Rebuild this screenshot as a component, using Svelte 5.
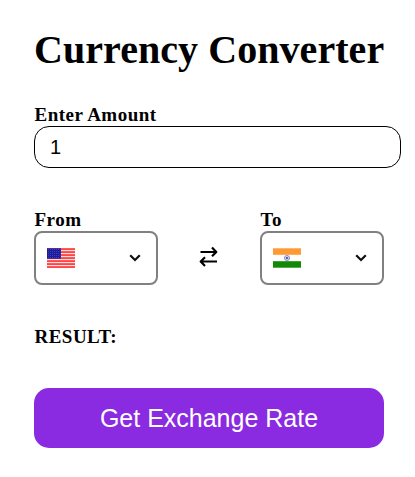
<script>
  let amount = $state('1');
  const redRows = [0, 2, 4, 6, 8, 10, 12];
  const starRows = [1, 3, 5, 7, 9];
  const starCols = [1, 3, 5, 7, 9, 11, 13];
</script>

{#snippet chevron()}
  <svg class="chevron" width="12" height="8" viewBox="0 0 12 8">
    <path d="M1.2 1.2 6 6 10.8 1.2" fill="none" stroke="#111" stroke-width="2.2" />
  </svg>
{/snippet}

<main>
  <h1>Currency Converter</h1>
  <label for="amount">Enter Amount</label>
  <input id="amount" type="text" bind:value={amount} />

  <div class="row">
    <div class="side">
      <span class="label">From</span>
      <button class="picker" aria-label="From currency">
        <svg width="28" height="20" viewBox="0 0 28 20">
          <rect width="28" height="19.5" y=".3" fill="#ffdcdc" />
          {#each redRows as r}
            <rect width="28" height="1.5" y={0.3 + r * 1.5} fill="#ff2222" />
          {/each}
          <rect width="14" height="10.4" y=".3" fill="#1c1ca0" />
          {#each starRows as y}
            {#each starCols as x}
              <rect {x} {y} width=".6" height=".6" fill="#7777cc" />
            {/each}
          {/each}
        </svg>
        {@render chevron()}
      </button>
    </div>
    <svg class="swap" width="20" height="22" viewBox="0 0 20 22">
      <g fill="none" stroke="#000" stroke-width="2.2">
        <path d="M1.5 6H17M13 1.5 17.3 6 13 10.2" stroke-linejoin="round" />
        <path d="M18 15.5H2M6 11.3 1.7 15.5 6 20" stroke-linejoin="round" />
      </g>
    </svg>
    <div class="side">
      <span class="label">To</span>
      <button class="picker" aria-label="To currency">
        <svg width="28" height="20" viewBox="0 0 28 20">
          <rect width="28" height="19.5" y=".3" fill="#fff" />
          <rect width="28" height="6.5" y=".3" fill="#ff9933" />
          <rect width="28" height="6.5" y="13.2" fill="#128807" />
          <circle cx="14" cy="10" r="2.5" fill="#dcdcf2" stroke="#8888cc" />
          <circle cx="14" cy="10" r="1.1" fill="#4444a8" />
        </svg>
        {@render chevron()}
      </button>
    </div>
  </div>

  <div class="result">RESULT:</div>
  <button class="submit">Get Exchange Rate</button>
</main>

<style>
  :global(body) {
    background: #fff;
  }
  main {
    box-sizing: border-box;
    width: 384px;
    padding: 27px 0 0 34px;
    display: flex;
    flex-direction: column;
    font-family: 'Liberation Serif', serif;
    color: #000;
  }
  h1 {
    margin: 0 0 31px;
    font-size: 40px;
    line-height: 46px;
    letter-spacing: 0.06px;
    white-space: nowrap;
  }
  label,
  .label,
  .result {
    display: block;
    font-size: 19px;
    line-height: 22px;
    font-weight: bold;
    letter-spacing: 0.48px;
    padding-left: 0.5px;
  }
  input {
    box-sizing: border-box;
    width: 367px;
    height: 42px;
    border: 1px solid #000;
    border-radius: 15px;
    padding: 0 15px;
    font: 20px 'Liberation Sans', sans-serif;
    color: #000;
    background: #fff;
    outline: none;
  }
  .row {
    display: flex;
    justify-content: space-between;
    margin-top: 41px;
  }
  .picker {
    box-sizing: border-box;
    width: 124px;
    height: 54px;
    border: 2px solid #808080;
    border-radius: 8px;
    background: #fff;
    display: flex;
    align-items: center;
    justify-content: space-between;
    padding: 0 15px 0 11px;
  }
  .swap {
    margin-top: 37px;
  }
  .result {
    margin-top: 41px;
  }
  .submit {
    margin-top: 40px;
    height: 60px;
    border: 0;
    border-radius: 15px;
    background: #8a2be2;
    color: #fff;
    font: 25px 'Liberation Sans', sans-serif;
  }
</style>
